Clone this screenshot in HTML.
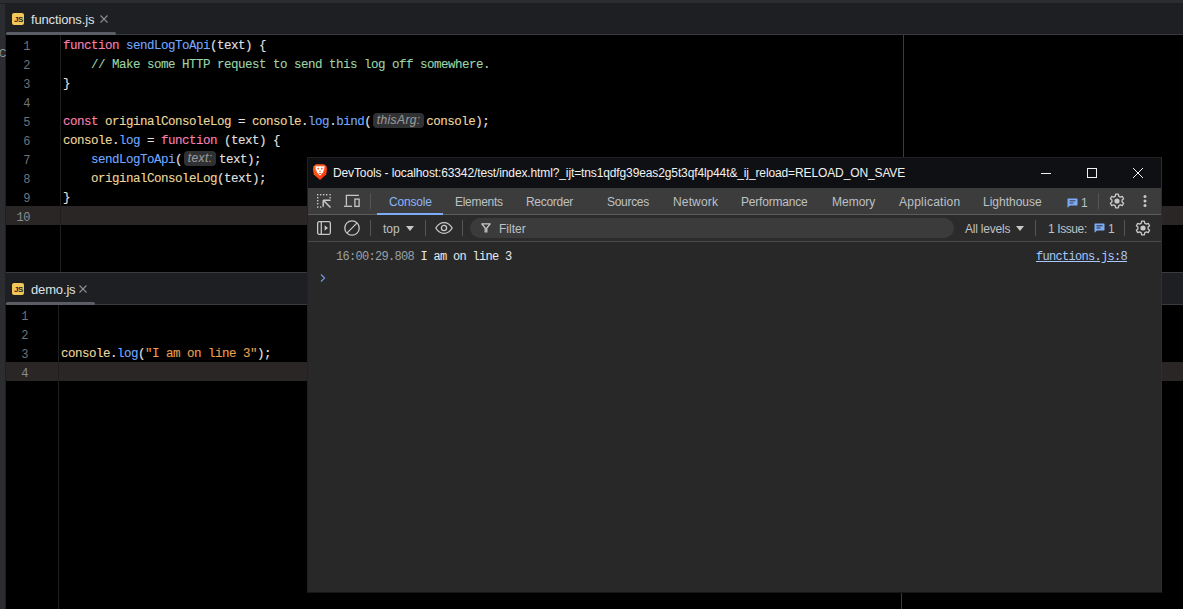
<!DOCTYPE html>
<html><head><meta charset="utf-8">
<style>
*{margin:0;padding:0;box-sizing:border-box}
html,body{width:1183px;height:609px;overflow:hidden;background:#000}
body{position:relative;font-family:"Liberation Sans",sans-serif}
.a{position:absolute}
.mono{font-family:"Liberation Mono",monospace}
/* IDE */
#topstrip{left:0;top:0;width:1183px;height:3px;background:#2b2d30}
#leftstrip{left:0;top:3px;width:6px;height:606px;background:#2b2d30;border-right:1px solid #1e1f22;border-top:1px solid #1e1f22}
.tabbar{left:6px;width:1177px;height:32px;background:#1e1f22;border-bottom:1px solid #393b40}
.jsicon{width:12px;height:12px;background:#f3c659;border-radius:2px;color:#2b2620;font-size:8px;font-weight:bold;line-height:14px;text-align:center;letter-spacing:-0.4px;padding-left:1px}
.tabtxt{font-size:13px;color:#dfe1e5;line-height:16px;white-space:nowrap;letter-spacing:-0.15px}
.tabx{width:8px;height:8px}
.underline{height:3px;background:#5b5e64;border-radius:2px}
.gut{width:1px;background:#1f1f1f}
.margin{width:1px;background:#393b3f}
.ln{width:24px;text-align:right;font-size:12px;letter-spacing:-0.4px;line-height:19px;color:#6f737a;height:19px;position:relative;top:2px}
.code{font-size:12.5px;letter-spacing:-0.5px;line-height:19px;color:#e2e2e2;white-space:pre;height:19px;position:relative;top:2px;-webkit-text-stroke:0.1px}
.hl{background:#2a2625;height:19px}
.kw{color:#fb80b2}
.fn{color:#72a9ff}
.cm{color:#9dd5a5}
.var{color:#efd89b}
.str{color:#e9a04f}
.hint{display:inline-block;position:relative;vertical-align:top;background:#303133;border-radius:4px;height:15px;margin-top:0px;font-family:"Liberation Sans",sans-serif;font-style:italic;font-size:12px;letter-spacing:0.4px;line-height:15px;color:#9a9a9a;text-align:center}
/* devtools */
#dt{left:307px;top:157px;width:855px;height:436px;background:#282828;border:1px solid #222;border-right-color:#2e2e2e;border-bottom-color:#161616}
#title{left:0;top:0;width:853px;height:30px;background:#111317}
#tabs{left:0;top:30px;width:853px;height:27px;background:#3c3c3c;border-bottom:1px solid #555}
#ctb{left:0;top:57px;width:853px;height:27px;background:#2d2d2d;border-bottom:1px solid #4a4a4a}
.dtt{font-size:12px;color:#bdc1c6;line-height:14px;white-space:nowrap}
.vsep{width:1px;background:#555}
</style></head>
<body>
<div class="a" id="leftstrip"></div>
<div class="a" id="topstrip"></div>
<div class="a" style="left:-1px;top:48px;font-size:10px;line-height:12px;color:#9a9ca0">C</div>

<!-- top editor tab bar -->
<div class="a tabbar" style="top:3px"></div>
<div class="a jsicon" style="left:12px;top:13px">JS</div>
<div class="a tabtxt" style="left:31px;top:12px">functions.js</div>
<svg class="a" style="left:100px;top:15px" width="8" height="8" viewBox="0 0 8 8"><path d="M0.5 0.5L7.5 7.5M7.5 0.5L0.5 7.5" stroke="#8c8e93" stroke-width="1.1"/></svg>
<div class="a underline" style="left:6px;top:32px;width:110px"></div>

<!-- top editor body -->
<div class="a hl" style="left:6px;top:206px;width:1177px"></div>
<div class="a gut" style="left:60px;top:35px;height:237px"></div>
<div class="a margin" style="left:903px;top:35px;height:237px"></div>
<div class="a" style="left:6px;top:36px">
<div class="ln mono">1</div><div class="ln mono">2</div><div class="ln mono">3</div><div class="ln mono">4</div><div class="ln mono">5</div><div class="ln mono">6</div><div class="ln mono">7</div><div class="ln mono">8</div><div class="ln mono">9</div><div class="ln mono" style="color:#8a8d93">10</div>
</div>
<div class="a" style="left:63px;top:35px">
<div class="code mono"><span class="kw">function</span> <span class="fn">sendLogToApi</span>(text) {</div>
<div class="code mono">    <span class="cm">// Make some HTTP request to send this log off somewhere.</span></div>
<div class="code mono">}</div>
<div class="code mono"></div>
<div class="code mono"><span class="kw">const</span> <span class="var">originalConsoleLog</span> = <span class="var">console</span>.<span class="fn">log</span>.<span class="fn">bind</span>(<span class="hint" style="width:51px;margin-left:2px;margin-right:2px">thisArg:</span><span class="var">console</span>);</div>
<div class="code mono"><span class="var">console</span>.<span class="fn">log</span> = <span class="kw">function</span> (text) {</div>
<div class="code mono">    <span class="fn">sendLogToApi</span>(<span class="hint" style="width:32px;margin-left:2px;margin-right:3px">text:</span>text);</div>
<div class="code mono">    <span class="var">originalConsoleLog</span>(text);</div>
<div class="code mono">}</div>
</div>

<!-- split -->
<div class="a" style="left:6px;top:272px;width:1177px;height:1px;background:#393b40"></div>

<!-- bottom tab bar -->
<div class="a tabbar" style="top:273px;height:32px"></div>
<div class="a jsicon" style="left:12px;top:283px">JS</div>
<div class="a tabtxt" style="left:31px;top:282px">demo.js</div>
<svg class="a" style="left:79px;top:285px" width="8" height="8" viewBox="0 0 8 8"><path d="M0.5 0.5L7.5 7.5M7.5 0.5L0.5 7.5" stroke="#8c8e93" stroke-width="1.1"/></svg>
<div class="a underline" style="left:6px;top:302px;width:89px"></div>

<!-- bottom editor body -->
<div class="a hl" style="left:6px;top:362px;width:1177px"></div>
<div class="a gut" style="left:58px;top:305px;height:304px"></div>
<div class="a margin" style="left:901px;top:305px;height:304px"></div>
<div class="a" style="left:4px;top:306px">
<div class="ln mono">1</div><div class="ln mono">2</div><div class="ln mono">3</div><div class="ln mono" style="color:#8a8d93">4</div>
</div>
<div class="a" style="left:61px;top:305px">
<div class="code mono"></div>
<div class="code mono"></div>
<div class="code mono"><span class="var">console</span>.<span class="fn">log</span>(<span class="str">"I am on line 3"</span>);</div>
</div>

<!-- DevTools window -->
<div class="a" id="dt"></div>
<div class="a" style="left:308px;top:158px;width:853px;height:30px;background:#0f1014"></div>
<div class="a" style="left:308px;top:188px;width:853px;height:26px;background:#3c3c3c"></div>
<div class="a" style="left:308px;top:214px;width:853px;height:1px;background:#5c5c5c"></div>
<div class="a" style="left:308px;top:215px;width:853px;height:26px;background:#2b2b2b"></div>
<div class="a" style="left:308px;top:241px;width:853px;height:1px;background:#4a4a4a"></div>

<!-- title bar -->
<svg class="a" style="left:313px;top:164px" width="14" height="16" viewBox="0 0 14 16">
<defs><linearGradient id="bg1" x1="0" y1="0" x2="1" y2="1"><stop offset="0" stop-color="#ff6a1a"/><stop offset="1" stop-color="#ff2d10"/></linearGradient></defs>
<path d="M3 0.2L11 0.2L13.4 2.2L14 5L13.2 10.4L7 16L0.8 10.4L0 5L0.6 2.2Z" fill="url(#bg1)"/>
<path d="M2.4 2.2L11.6 2.2L11.2 5.2L10 8.2L7.3 11.6L6.7 11.6L4 8.2L2.8 5.2Z" fill="#fff"/>
<circle cx="5.2" cy="4.6" r="0.95" fill="#ff5a1f"/><circle cx="8.8" cy="4.6" r="0.95" fill="#ff5a1f"/><path d="M6 6.8H8L7 8.2Z" fill="#ff5a1f"/><ellipse cx="7" cy="9.4" rx="1.1" ry="0.6" fill="#ff5a1f"/>
</svg>
<div class="a dtt" style="left:333px;top:166px;color:#f2f2f2;letter-spacing:-0.12px">DevTools - localhost:63342/test/index.html?_ijt=tns1qdfg39eas2g5t3qf4lp44t&amp;_ij_reload=RELOAD_ON_SAVE</div>
<div class="a" style="left:1041px;top:173px;width:10px;height:1px;background:#f0f0f0"></div>
<div class="a" style="left:1087px;top:168px;width:10px;height:10px;border:1px solid #f0f0f0"></div>
<svg class="a" style="left:1133px;top:168px" width="10" height="10" viewBox="0 0 10 10"><path d="M0 0L10 10M10 0L0 10" stroke="#f0f0f0" stroke-width="1"/></svg>

<!-- tabs toolbar -->
<svg class="a" style="left:317px;top:194px" width="14" height="14" viewBox="0 0 14 14" fill="#c8c8c8">
<rect x="0" y="0" width="1.4" height="1.4"/><rect x="3" y="0" width="1.4" height="1.4"/><rect x="6" y="0" width="1.4" height="1.4"/><rect x="9" y="0" width="1.4" height="1.4"/><rect x="12.4" y="0" width="1.4" height="1.4"/>
<rect x="0" y="3" width="1.4" height="1.4"/><rect x="0" y="6" width="1.4" height="1.4"/><rect x="0" y="9" width="1.4" height="1.4"/><rect x="0" y="12.4" width="1.4" height="1.4"/><rect x="3" y="12.4" width="1.4" height="1.4"/>
<rect x="12.4" y="3" width="1.4" height="1.4"/>
<path d="M6.5 6.5L13.5 13.5M6.2 6.2L13.6 6.2M6.2 6.2L6.2 12.8" stroke="#c8c8c8" stroke-width="1.45" fill="none"/>
</svg>
<svg class="a" style="left:344px;top:194px" width="17" height="14" viewBox="0 0 17 14" fill="none" stroke="#c8c8c8" stroke-width="1.3">
<path d="M14.8 1.4L2.4 1.4L2.4 11.6"/><path d="M0 12.3L8 12.3"/><rect x="10.9" y="5.1" width="4.2" height="7.3"/>
</svg>
<div class="a vsep" style="left:370px;top:193px;height:16px"></div>
<div class="a dtt" style="left:389px;top:195px;color:#8ab4f8;letter-spacing:-0.2px">Console</div>
<div class="a" style="left:377px;top:213px;width:66px;height:2px;background:#7cacf8"></div>
<div class="a dtt" style="left:455px;top:195px;letter-spacing:-0.3px">Elements</div>
<div class="a dtt" style="left:526px;top:195px;letter-spacing:-0.3px">Recorder</div>
<div class="a dtt" style="left:607px;top:195px;letter-spacing:-0.3px">Sources</div>
<div class="a dtt" style="left:673px;top:195px;letter-spacing:0.15px">Network</div>
<div class="a dtt" style="left:741px;top:195px;letter-spacing:-0.2px">Performance</div>
<div class="a dtt" style="left:832px;top:195px">Memory</div>
<div class="a dtt" style="left:899px;top:195px;letter-spacing:0.25px">Application</div>
<div class="a dtt" style="left:983px;top:195px">Lighthouse</div>
<svg class="a" style="left:1067px;top:198px" width="11" height="10" viewBox="0 0 11 10"><path d="M1 0.5H10A0.8 0.8 0 0 1 10.5 1.3V7A0.8 0.8 0 0 1 10 7.6H3L0.5 9.8V1.3A0.8 0.8 0 0 1 1 0.5Z" fill="#7cacf8"/><path d="M2.5 2.8H8.5M2.5 5H6.5" stroke="#3c3c3c" stroke-width="1"/></svg>
<div class="a dtt" style="left:1081px;top:196px;color:#bdc1c6">1</div>
<div class="a vsep" style="left:1098px;top:193px;height:16px"></div>
<svg class="a" style="left:1109px;top:193px" width="16" height="16" viewBox="0 0 16 16"><path d="M6.31 3.08 L6.66 1.13 L9.34 1.13 L9.69 3.08 L11.41 4.08 L13.28 3.41 L14.62 5.72 L13.10 7.01 L13.10 8.99 L14.62 10.28 L13.28 12.59 L11.41 11.92 L9.69 12.92 L9.34 14.87 L6.66 14.87 L6.31 12.92 L4.59 11.92 L2.72 12.59 L1.38 10.28 L2.90 8.99 L2.90 7.01 L1.38 5.72 L2.72 3.41 L4.59 4.08Z" fill="none" stroke="#c8c8c8" stroke-width="1.3" stroke-linejoin="round"/><circle cx="8" cy="8" r="2.6" fill="#c8c8c8"/></svg>
<svg class="a" style="left:1143px;top:195px" width="4" height="12" viewBox="0 0 4 12" fill="#c8c8c8"><circle cx="2" cy="1.6" r="1.5"/><circle cx="2" cy="6" r="1.5"/><circle cx="2" cy="10.4" r="1.5"/></svg>

<!-- console toolbar -->
<svg class="a" style="left:317px;top:221px" width="14" height="14" viewBox="0 0 14 14" fill="none" stroke="#c8c8c8" stroke-width="1.3"><rect x="0.65" y="0.65" width="12.7" height="12.7" rx="1.5"/><path d="M4.3 0.6V13.4"/><path d="M7.6 4.2L11 7L7.6 9.8Z" fill="#c8c8c8" stroke="none"/></svg>
<svg class="a" style="left:344px;top:220px" width="16" height="16" viewBox="0 0 16 16" fill="none" stroke="#c8c8c8" stroke-width="1.3"><circle cx="8" cy="8" r="7.2"/><path d="M13.1 2.9L2.9 13.1"/></svg>
<div class="a vsep" style="left:370px;top:220px;height:16px"></div>
<div class="a dtt" style="left:383px;top:222px;color:#bdc1c6">top</div>
<svg class="a" style="left:406px;top:226px" width="8" height="5" viewBox="0 0 8 5"><path d="M0 0H8L4 5Z" fill="#c8c8c8"/></svg>
<div class="a vsep" style="left:425px;top:220px;height:16px"></div>
<svg class="a" style="left:435px;top:222px" width="18" height="12" viewBox="0 0 18 12" fill="none" stroke="#c8c8c8" stroke-width="1.3"><path d="M0.8 6C3 2.4 5.8 0.7 9 0.7S15 2.4 17.2 6C15 9.6 12.2 11.3 9 11.3S3 9.6 0.8 6Z"/><circle cx="9" cy="6" r="2.6"/></svg>
<div class="a vsep" style="left:462px;top:220px;height:16px"></div>
<div class="a" style="left:470px;top:218px;width:484px;height:20px;border-radius:10px;background:#3b3b3b"></div>
<svg class="a" style="left:481px;top:223px" width="10" height="10" viewBox="0 0 10 10" fill="none" stroke="#c8c8c8" stroke-width="1.3"><path d="M0.3 0.8H9.7M0.8 0.8L4.2 5V9.6M9.2 0.8L5.8 5V9.6"/></svg>
<div class="a dtt" style="left:499px;top:222px;color:#bdc1c6">Filter</div>
<div class="a dtt" style="left:965px;top:222px;letter-spacing:-0.2px">All levels</div>
<svg class="a" style="left:1016px;top:226px" width="8" height="5" viewBox="0 0 8 5"><path d="M0 0H8L4 5Z" fill="#c8c8c8"/></svg>
<div class="a vsep" style="left:1035px;top:220px;height:16px"></div>
<div class="a dtt" style="left:1048px;top:222px;letter-spacing:-0.4px">1 Issue:</div>
<svg class="a" style="left:1094px;top:223px" width="11" height="10" viewBox="0 0 11 10"><path d="M1 0.5H10A0.8 0.8 0 0 1 10.5 1.3V7A0.8 0.8 0 0 1 10 7.6H3L0.5 9.8V1.3A0.8 0.8 0 0 1 1 0.5Z" fill="#7cacf8"/><path d="M2.5 2.8H8.5M2.5 5H6.5" stroke="#2b2b2b" stroke-width="1"/></svg>
<div class="a dtt" style="left:1108px;top:222px">1</div>
<div class="a vsep" style="left:1124px;top:220px;height:16px"></div>
<svg class="a" style="left:1135px;top:220px" width="16" height="16" viewBox="0 0 16 16"><path d="M6.31 3.08 L6.66 1.13 L9.34 1.13 L9.69 3.08 L11.41 4.08 L13.28 3.41 L14.62 5.72 L13.10 7.01 L13.10 8.99 L14.62 10.28 L13.28 12.59 L11.41 11.92 L9.69 12.92 L9.34 14.87 L6.66 14.87 L6.31 12.92 L4.59 11.92 L2.72 12.59 L1.38 10.28 L2.90 8.99 L2.90 7.01 L1.38 5.72 L2.72 3.41 L4.59 4.08Z" fill="none" stroke="#c8c8c8" stroke-width="1.3" stroke-linejoin="round"/><circle cx="8" cy="8" r="2.6" fill="#c8c8c8"/></svg>

<!-- console content -->
<div class="a mono" style="left:336px;top:251px;font-size:12px;letter-spacing:-0.7px;line-height:13px;color:#9aa0a6;white-space:pre">16:00:29.808 <span style="color:#e8eaed">I am on line 3</span></div>
<div class="a mono" style="left:1036px;top:251px;font-size:12px;letter-spacing:-0.7px;line-height:13px;color:#a8c7fa;text-decoration:underline;white-space:pre">functions.js:8</div>
<svg class="a" style="left:320px;top:274px" width="6" height="8" viewBox="0 0 6 8"><path d="M1 0.5L4.6 4L1 7.5" fill="none" stroke="#7399dc" stroke-width="1.15"/></svg>


</body></html>
